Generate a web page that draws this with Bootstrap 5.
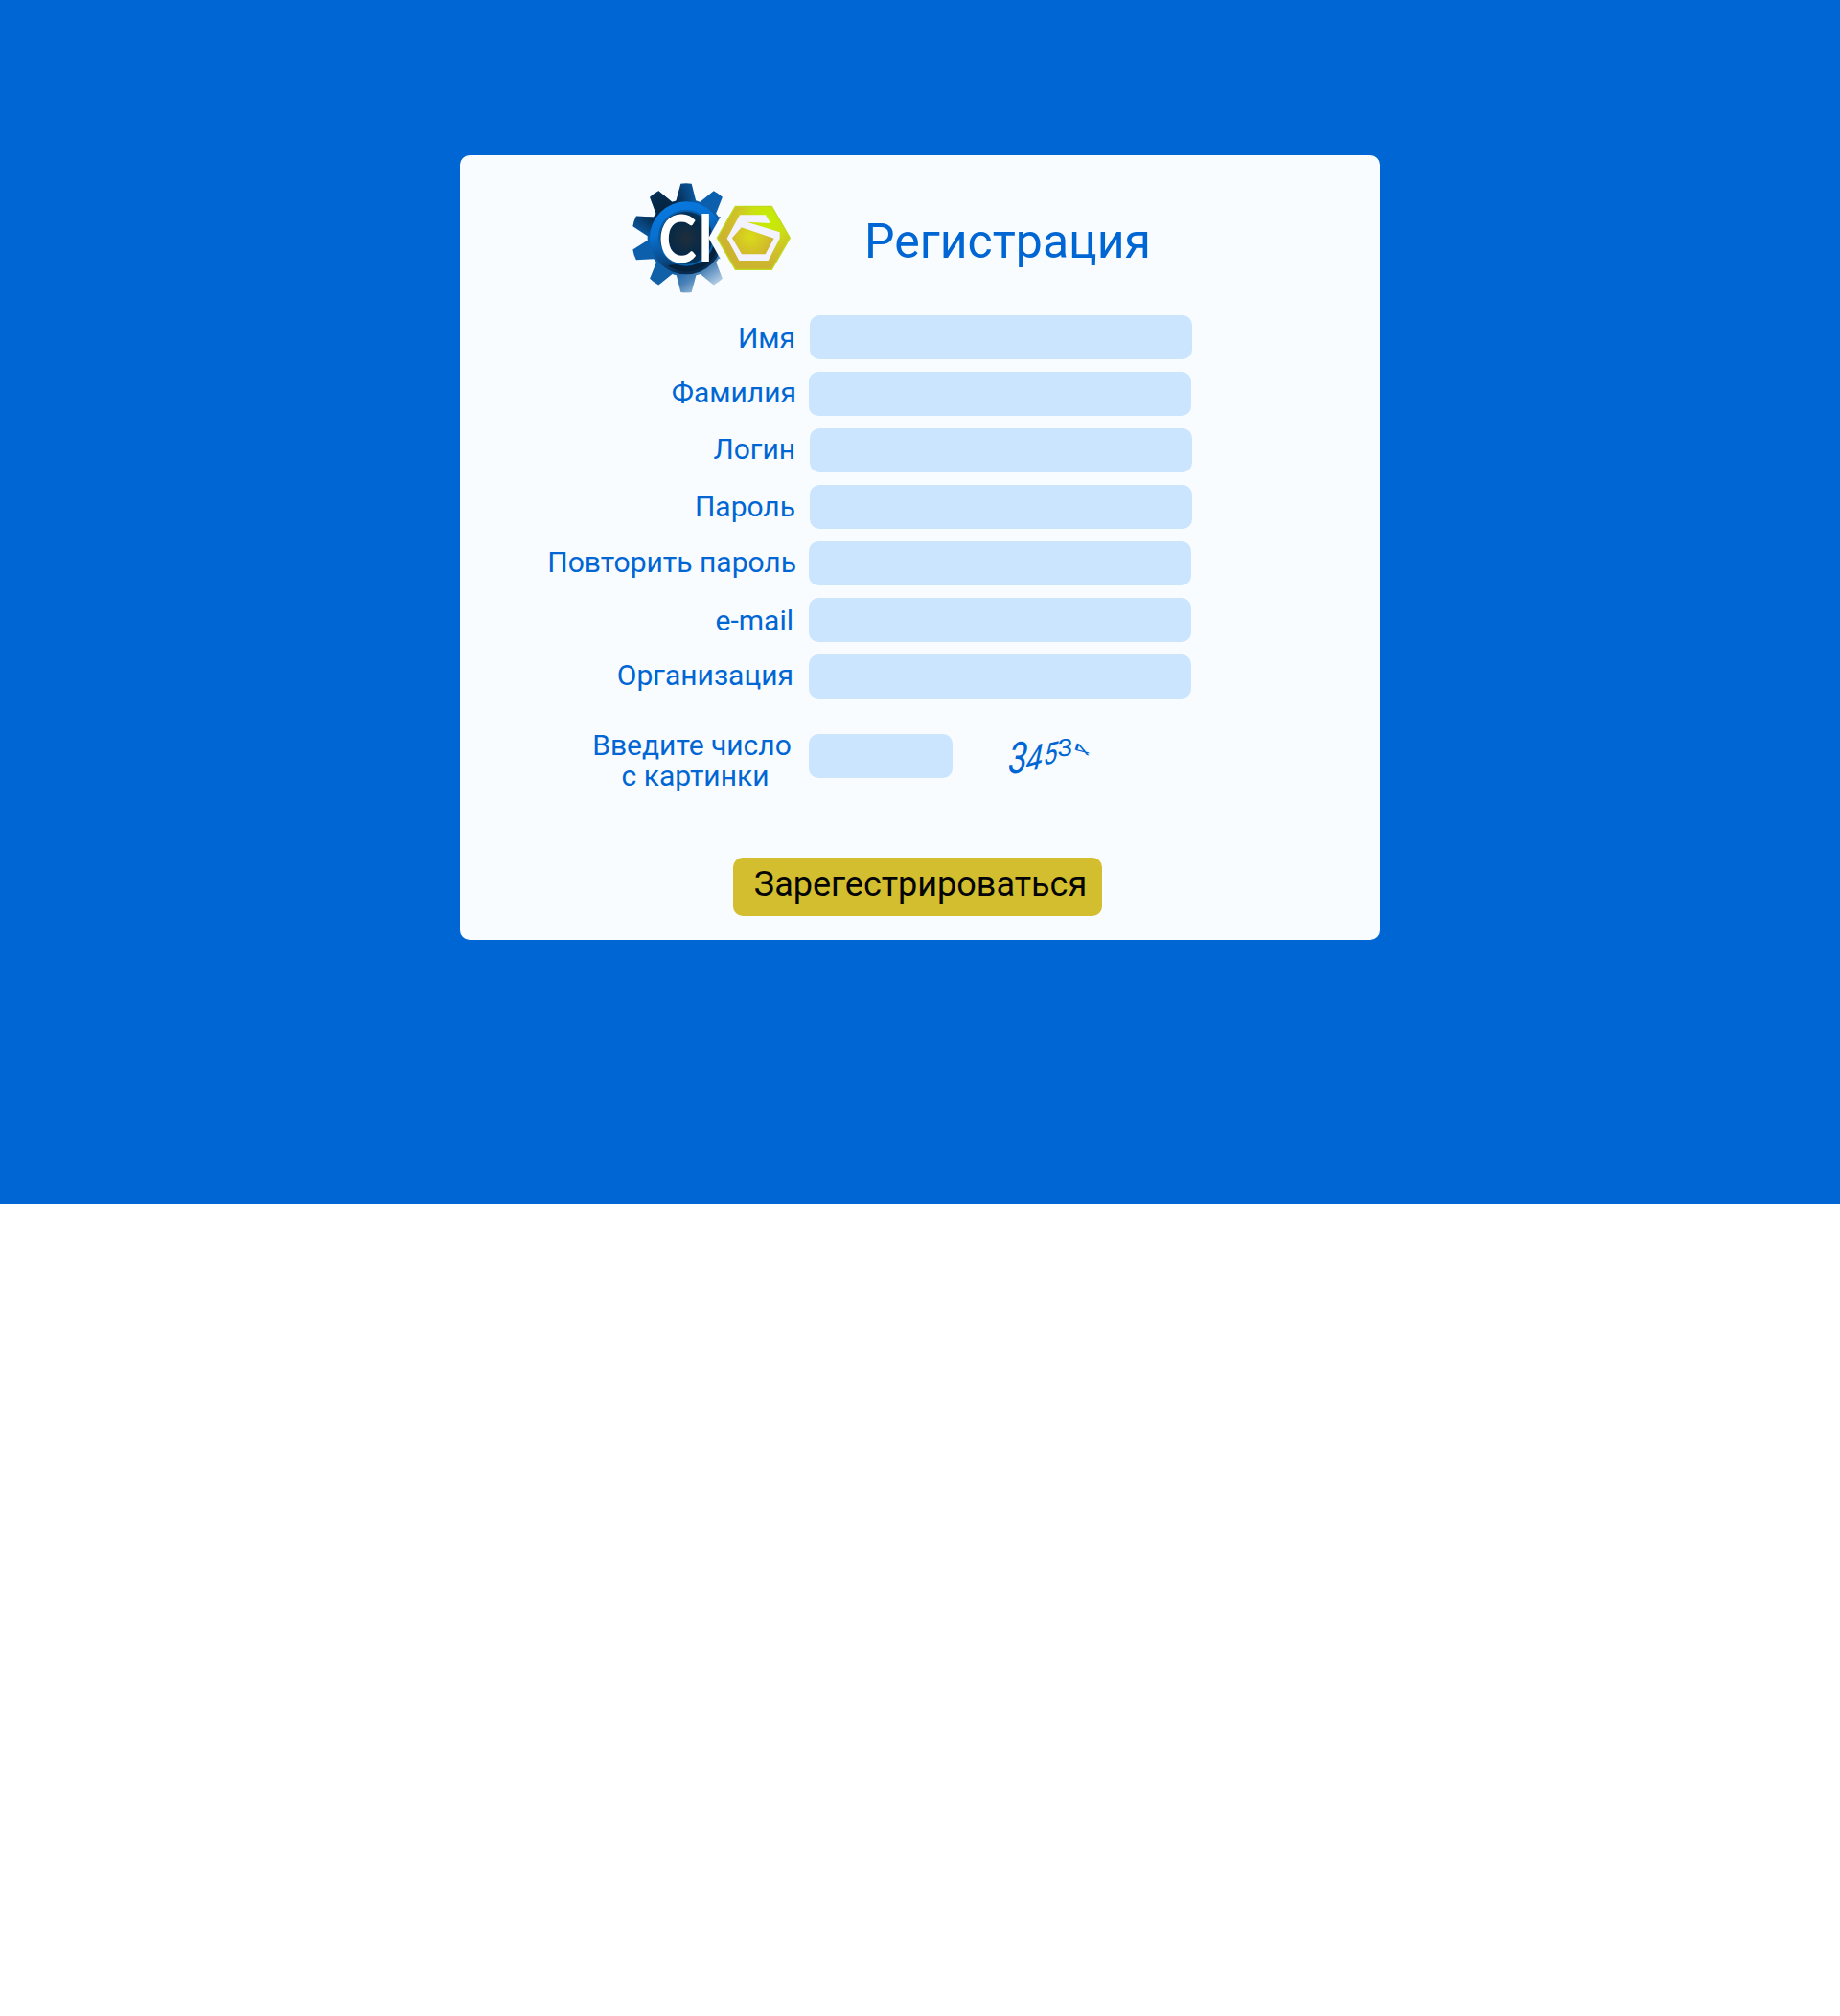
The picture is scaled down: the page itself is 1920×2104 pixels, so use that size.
<!DOCTYPE html>
<html lang="ru">
<head>
<meta charset="utf-8">
<meta name="viewport" content="width=device-width, initial-scale=1">
<title>Регистрация</title>
<link href="https://cdn.jsdelivr.net/npm/bootstrap@5.3.0/dist/css/bootstrap.min.css" rel="stylesheet">
<style>
body{font-family:Roboto,"Liberation Sans",sans-serif;background:#fff;color:#0066d3}
.hero{background:#0066d3;height:1257px;padding-top:162px}
.reg-card{width:960px;height:819px;background:#f9fcff;border:0;border-radius:10px}
.reg-head{height:149px;margin:18px 0 0 170px}
.reg-title{font-size:50px;line-height:60px;margin:42px 0 0 62px;font-weight:400}
.logo-svg{width:190px;height:136px}
.field-row{height:46px;margin-bottom:13px}
.field-name{width:350px;font-size:30px;line-height:46px;height:46px;white-space:nowrap}
.text-up{line-height:44px}
.text-down{line-height:48px}
.field-input{width:399px;height:46px;background:#cbe5ff;border:0;border-radius:10px;margin-left:15px;color:#0066d3;font-size:24px}
.wide-left .field-name{width:351px}
.wide-left .field-input{margin-left:13px}
.back-2 .field-name{padding-right:3px}
.code-row{height:80px;margin-top:37px}
.code-name{width:210px;margin-left:137px;font-size:30px;line-height:32px;margin-top:-4px;text-align:center;white-space:nowrap}
.code-name span{display:block}
.code-name .second-line{padding-left:7px}
.code-row .field-input{width:150px;margin-left:17px}
.code-svg{width:130px;height:80px;margin:-16px 0 0 36px}
.reg-btn{width:385px;height:61px;margin:49px 0 0 285px;background:#d2be2e;border:0;border-radius:10px;color:#050505;font-size:36px;line-height:54px;padding:1px 0 6px 6px;white-space:nowrap}
.reg-btn:hover{background:#c5b126;color:#050505}
</style>
<script src="https://cdn.jsdelivr.net/npm/bootstrap@5.3.0/dist/js/bootstrap.bundle.min.js"></script>
</head>
<body>
<main class="hero">
<form class="card reg-card mx-auto d-block overflow-hidden">
  <div class="reg-head d-flex align-items-start">
    <svg class="logo-svg flex-shrink-0" viewBox="0 0 570 408" aria-label="СКБ">
      <defs>
        <linearGradient id="gearFill" x1="90" y1="60" x2="290" y2="350" gradientUnits="userSpaceOnUse"><stop offset="0" stop-color="#0d5da8"/><stop offset=".13" stop-color="#0a4d8c"/><stop offset=".32" stop-color="#0a5fae"/><stop offset=".7" stop-color="#1261a7"/><stop offset=".84" stop-color="#4c83b8"/><stop offset="1" stop-color="#b4cde4"/></linearGradient>
        <radialGradient id="gearShade" cx="128" cy="112" r="105" gradientUnits="userSpaceOnUse"><stop offset="0" stop-color="#04233f"/><stop offset=".45" stop-color="#04233f" stop-opacity=".8"/><stop offset="1" stop-color="#04233f" stop-opacity="0"/></radialGradient>
        <linearGradient id="ringFill" x1="0" y1="0" x2=".35" y2="1"><stop offset="0" stop-color="#087ce6"/><stop offset=".45" stop-color="#0870d0"/><stop offset=".75" stop-color="#0a4d8e"/><stop offset="1" stop-color="#082c50"/></linearGradient>
        <radialGradient id="coreFill"><stop offset="0" stop-color="#202e3b"/><stop offset=".65" stop-color="#062947"/><stop offset="1" stop-color="#04355f"/></radialGradient>
        <radialGradient id="hexFill" cx="455" cy="145" r="150" gradientUnits="userSpaceOnUse"><stop offset="0" stop-color="#c4ee00"/><stop offset=".35" stop-color="#cbe111"/><stop offset=".75" stop-color="#d0bd2b"/><stop offset="1" stop-color="#ccb42f"/></radialGradient>
        <radialGradient id="pentFill" cx="400" cy="200" r="75" gradientUnits="userSpaceOnUse"><stop offset="0" stop-color="#d9dc19"/><stop offset="1" stop-color="#d0b22f"/></radialGradient>
        <path id="cog" d="M164 98L181 35Q198 32 215 35L231 98L230 205H166Z"/>
        <clipPath id="gearShape"><circle cx="198" cy="205" r="121"/><use href="#cog"/><use href="#cog" transform="rotate(36 198 205)"/><use href="#cog" transform="rotate(72 198 205)"/><use href="#cog" transform="rotate(108 198 205)"/><use href="#cog" transform="rotate(144 198 205)"/><use href="#cog" transform="rotate(180 198 205)"/><use href="#cog" transform="rotate(216 198 205)"/><use href="#cog" transform="rotate(252 198 205)"/><use href="#cog" transform="rotate(288 198 205)"/><use href="#cog" transform="rotate(324 198 205)"/></clipPath>
      </defs>
      <g clip-path="url(#gearShape)"><path fill="url(#gearFill)" d="M20 20h360v370H20z"/><path fill="url(#gearShade)" d="M20 20h360v370H20z"/></g>
      <circle cx="198" cy="205" r="114" fill="url(#ringFill)"/>
      <path d="M140 292A103 103 0 0 0 302 210L290 150Q306 270 140 292" fill="#06213c"/>
      <circle cx="198" cy="205" r="85" fill="url(#coreFill)" stroke="#075fac" stroke-width="6"/>
      <path d="M268 205L332 92H430V318H332Z" fill="#f9fcff"/>
      <g fill="#fff" font-family="Lato"><text transform="translate(112 281) scale(.86 1)" font-size="209" font-weight="700">C</text><text transform="translate(234 279) scale(.8 1)" font-size="206" font-weight="700">I</text></g>
      <path d="M352 106H466L523 205L466 304H352L295 205Z" fill="url(#hexFill)" stroke="#bfdb1e" stroke-width="4"/>
      <path d="M369 170L482 202L450 258H369L342 204Z" fill="url(#pentFill)"/>
      <path d="M366 133H447L462 159L388 155L491 187V206L455 276H364L326 206ZM371 172L342 205L372 256H446L473 206Z" fill="#f2f3ff" fill-rule="evenodd"/>
    </svg>
    <h1 class="reg-title">Регистрация</h1>
  </div>
  <div class="field-row d-flex"><label for="firstName" class="field-name text-end text-down">Имя</label><input id="firstName" class="form-control field-input"></div>
  <div class="field-row d-flex wide-left"><label for="lastName" class="field-name text-end text-up">Фамилия</label><input id="lastName" class="form-control field-input"></div>
  <div class="field-row d-flex"><label for="login" class="field-name text-end text-up">Логин</label><input id="login" class="form-control field-input"></div>
  <div class="field-row d-flex"><label for="pass" class="field-name text-end">Пароль</label><input id="pass" type="password" class="form-control field-input"></div>
  <div class="field-row d-flex wide-left"><label for="pass2" class="field-name text-end text-up">Повторить пароль</label><input id="pass2" type="password" class="form-control field-input"></div>
  <div class="field-row d-flex wide-left back-2"><label for="email" class="field-name text-end text-down">e-mail</label><input id="email" type="email" class="form-control field-input"></div>
  <div class="field-row d-flex wide-left back-2"><label for="org" class="field-name text-end text-up">Организация</label><input id="org" class="form-control field-input"></div>
  <div class="code-row d-flex align-items-start">
    <label for="code" class="code-name"><span>Введите число</span><span class="second-line">с картинки</span></label>
    <input id="code" class="form-control field-input">
    <svg class="code-svg" viewBox="0 0 130 80" fill="#0066d3" font-family="Roboto" font-size="20">
      <text transform="matrix(1.75 0 -.42 2.3 20 56.500)">3</text>
      <text transform="matrix(1.55 -.45 -.38 1.9 38.500 57)">4</text>
      <text transform="matrix(1.3 -.3 -.3 1.6 57.500 49)">5</text>
      <text transform="matrix(1.45 -.1 -.05 1.25 73 39.500)">3</text>
      <text transform="matrix(1.4 .35 .7 .85 94 35.500)">4</text>
    </svg>
  </div>
  <button type="button" class="btn reg-btn">Зарегестрироваться</button>
</form>
</main>
</body>
</html>
